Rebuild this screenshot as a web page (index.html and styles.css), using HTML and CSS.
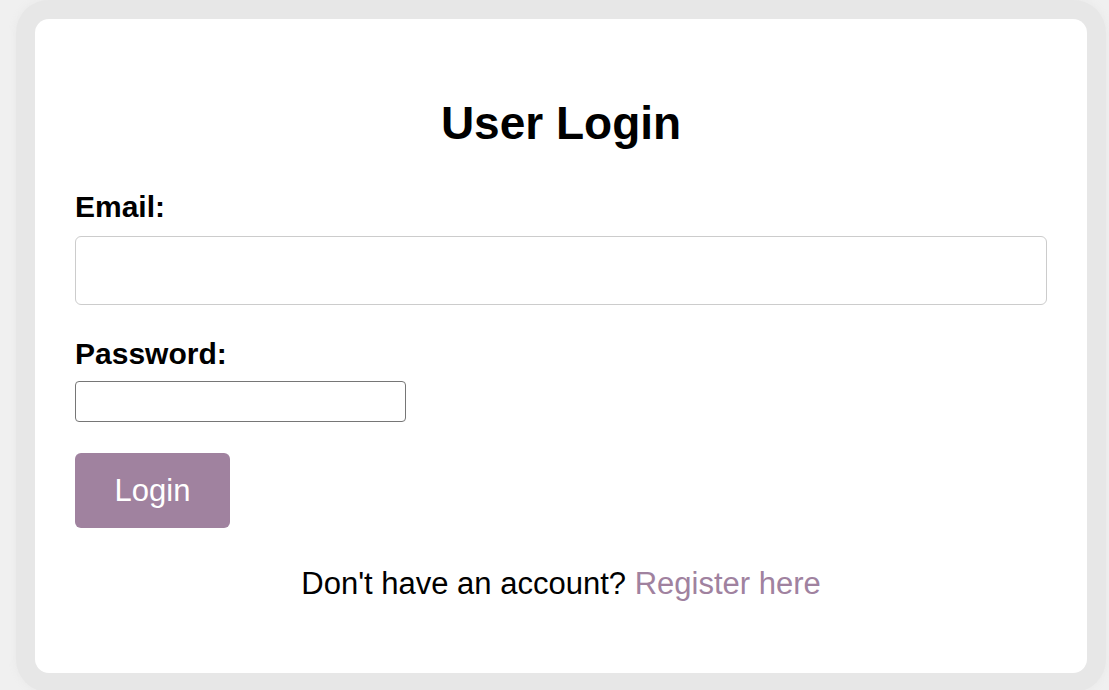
FILE: index.html
```html
<!DOCTYPE html>
<html lang="en">
<head>
<meta charset="utf-8">
<title>User Login</title>
<link rel="stylesheet" href="styles.css">
</head>
<body>
<div class="card">
  <h2 class="title">User Login</h2>
  <form class="form">
    <label class="label" for="email">Email:</label>
    <input class="input-email" type="email" id="email">
    <label class="label label-pass" for="password">Password:</label>
    <input class="input-pass" type="password" id="password">
    <button class="btn" type="button">Login</button>
  </form>
  <p class="footer">Don't have an account? <a class="link" href="#">Register here</a></p>
</div>
</body>
</html>
```

FILE: styles.css
```css
html, body {
  margin: 0;
  padding: 0;
}
body {
  background: #f0f0f0;
  font-family: "Liberation Sans", Arial, sans-serif;
  height: 690px;
  overflow: hidden;
}
.card {
  box-sizing: border-box;
  margin: 19px 22px 0 35px;
  height: 654px;
  background: #ffffff;
  border-radius: 14px;
  padding: 0 40px;
  box-shadow: 0 0 0 19px #e7e7e7, 0 0 6px 21px #ebebeb;
  display: flex;
  flex-direction: column;
}
.title {
  margin: 78px 0 0;
  text-align: center;
  font-size: 46px;
  line-height: 53px;
  font-weight: bold;
  color: #000;
}
.form {
  display: flex;
  flex-direction: column;
  align-items: flex-start;
  margin-top: 40px;
}
.label {
  font-size: 30px;
  line-height: 34px;
  font-weight: bold;
  color: #000;
  margin-bottom: 12px;
}
.label-pass {
  margin-top: 32px;
  margin-bottom: 10px;
}
.input-email {
  box-sizing: border-box;
  width: 100%;
  height: 69px;
  border: 1.5px solid #cccccc;
  border-radius: 6px;
  margin: 0;
  padding: 0 12px;
  font-size: 28px;
}
.input-pass {
  box-sizing: border-box;
  width: 331px;
  height: 41px;
  border: 1.5px solid #767676;
  border-radius: 4px;
  margin: 0;
  padding: 0 4px;
  font-size: 20px;
}
.btn {
  margin-top: 31px;
  width: 155px;
  height: 75px;
  border: none;
  border-radius: 6px;
  background: #a0829f;
  color: #ffffff;
  font-family: "Liberation Sans", Arial, sans-serif;
  font-size: 31px;
  padding: 0;
}
.footer {
  margin: 38px 0 0;
  text-align: center;
  font-size: 31px;
  line-height: 36px;
  color: #000;
}
.link {
  color: #a0829f;
  text-decoration: none;
}
```
